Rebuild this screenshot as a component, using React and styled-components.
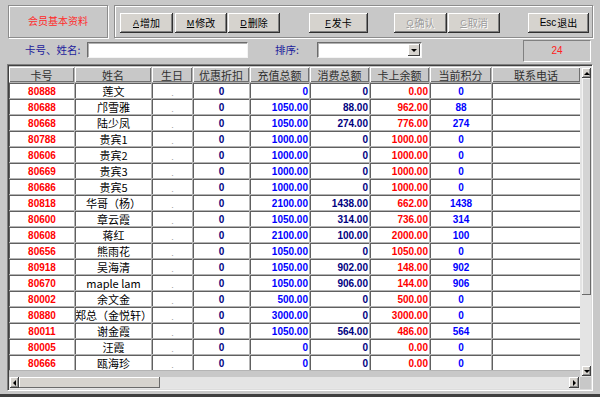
import React from 'react';
import styled, { createGlobalStyle } from 'styled-components';

const GlobalStyle = createGlobalStyle`
  html, body { margin: 0; padding: 0; background: #c8c8c8; }
  body { font-family: "Noto Sans CJK SC", "Liberation Sans", sans-serif; }
  * { box-sizing: border-box; }
`;

const CJK = `"Noto Sans CJK SC", "Liberation Sans", sans-serif`;
const NUM = `"Liberation Sans", Arial, sans-serif`;

const Window = styled.div`
  width: 600px;
  height: 397px;
  background: #c8c8c8;
  border-bottom: 3px solid #404040;
  padding-bottom: 3px;
  display: flex;
  flex-direction: column;
  overflow: hidden;
`;

const TopBar = styled.div`
  display: flex;
  gap: 6px;
  padding: 5px 7px 0 8px;
  height: 38px;
`;

const Etched = styled.div`
  border: 1px solid #8c8c8c;
  box-shadow: inset 1px 1px #ffffff, 1px 1px #ffffff;
  height: 33px;
`;

const TitlePanel = styled(Etched)`
  width: 100px;
  display: flex;
  align-items: center;
  justify-content: center;
  padding-bottom: 3px;
  color: #ff2a2a;
  font-family: ${CJK};
  font-size: 10px;
`;

const Toolbar = styled(Etched)`
  flex: 1;
  display: flex;
  align-items: flex-start;
  padding: 7px 0 0 5px;
`;

const ToolButton = styled.div`
  width: ${p => p.$w}px;
  margin-left: ${p => p.$ml || 0}px;
  height: 20px;
  background: #d6d3ce;
  box-shadow: inset -1px -1px #303030, inset 1px 1px #ffffff, inset -2px -2px #808080;
  display: flex;
  align-items: center;
  justify-content: center;
  font-family: ${CJK};
  font-size: 10px;
  color: ${p => (p.$disabled ? '#9c9c9c' : '#000')};
  text-shadow: ${p => (p.$disabled ? '1px 1px #ffffff' : 'none')};
  padding-bottom: 1px;
`;

const Key = styled.span`
  font-family: ${NUM};
  font-size: ${p => (p.$plain ? 10 : 9)}px;
  text-decoration: ${p => (p.$plain ? 'none' : 'underline')};
  margin-right: 1px;
`;

const SearchRow = styled.div`
  display: flex;
  align-items: flex-start;
  height: 23px;
  margin-top: 2px;
  padding-left: 25px;
`;

const FieldLabel = styled.div`
  width: ${p => p.$w}px;
  margin-left: ${p => p.$ml || 0}px;
  margin-top: 2px;
  height: 15px;
  line-height: 15px;
  color: #1c1c9c;
  font-family: ${CJK};
  font-size: 10.5px;
  white-space: nowrap;
`;

const TextInput = styled.div`
  width: ${p => p.$w}px;
  height: 16px;
  margin-top: 2px;
  background: #fff;
  border: 1px solid;
  border-color: #6c6c6c #f4f4f4 #f4f4f4 #6c6c6c;
  box-shadow: inset 1px 1px #b0b0b0;
`;

const SelectBox = styled(TextInput)`
  display: flex;
  justify-content: flex-end;
  padding: 1px;
`;

const DropButton = styled.div`
  width: 12px;
  height: 12px;
  background: #d6d3ce;
  box-shadow: inset -1px -1px #404040, inset 1px 1px #ffffff;
  display: flex;
  align-items: center;
  justify-content: center;
`;

const Counter = styled.div`
  width: 68px;
  height: 22px;
  margin-left: auto;
  margin-right: 9px;
  border: 1px solid;
  border-color: #808080 #ffffff #ffffff #808080;
  display: flex;
  align-items: center;
  justify-content: center;
  color: #ff2020;
  font-family: ${NUM};
  font-size: 10px;
  padding-bottom: 2px;
`;

const GridFrame = styled.div`
  flex: 1;
  margin: 1px 7px 0 7px;
  border: 1px solid;
  border-color: #808080 #ffffff #ffffff #808080;
  box-shadow: inset 1px 1px #404040, inset -1px -1px #dcdcdc;
  padding: 1px;
  display: grid;
  grid-template-columns: 571px 11px;
  grid-template-rows: 1fr 12px;
`;

const GridMain = styled.div`
  padding-top: 1px;
  overflow: hidden;
  background: #c8c8c8;
`;

const Table = styled.div`
  display: grid;
  grid-template-columns: ${p => p.$cols};
  grid-auto-rows: 15px;
  gap: 1px;
  padding-bottom: 1px;
  background: #b4b4b4;
  width: max-content;
`;

const HeadCell = styled.div`
  background: #c8c8c8;
  box-shadow: inset 1px 1px #ffffff, inset -1px -1px #707070;
  display: flex;
  align-items: center;
  justify-content: center;
  font-family: ${CJK};
  font-size: 11px;
  color: #303030;
  white-space: nowrap;
  overflow: hidden;
`;

const kindStyles = {
  id: { color: '#ff0000', font: NUM, weight: 700, size: 10 },
  name: { color: '#000000', font: CJK, weight: 400, size: 11 },
  dot: { color: '#9a9a9a', font: NUM, weight: 400, size: 9 },
  navy: { color: '#000080', font: NUM, weight: 700, size: 10 },
  blue: { color: '#0000ff', font: NUM, weight: 700, size: 10 },
  red: { color: '#ff0000', font: NUM, weight: 700, size: 10 },
};

const Cell = styled.div`
  background: #ffffff;
  border-top: 1px solid #606060;
  border-left: 1px solid #606060;
  display: flex;
  align-items: center;
  justify-content: ${p => (p.$align === 'right' ? 'flex-end' : 'center')};
  padding: ${p => (p.$align === 'right' ? '0 1px 0 0' : '0')};
  padding-top: ${p => (p.$kind === 'dot' ? '3px' : '0')};
  color: ${p => kindStyles[p.$kind].color};
  font-family: ${p => kindStyles[p.$kind].font};
  font-weight: ${p => kindStyles[p.$kind].weight};
  font-size: ${p => kindStyles[p.$kind].size}px;
  white-space: nowrap;
  overflow: hidden;
`;

const VScroll = styled.div`
  display: flex;
  flex-direction: column;
  padding: 2px 0 1px 2px;
  background: #e4e4e4;
`;

const ScrollBtn = styled.div`
  flex: none;
  width: ${p => p.$w}px;
  height: ${p => p.$h}px;
  background: #d6d3ce;
  box-shadow: inset -1px -1px #404040, inset 1px 1px #ffffff, inset -2px -2px #909090;
  display: flex;
  align-items: center;
  justify-content: center;
`;

const VThumb = styled.div`
  flex: none;
  width: 9px;
  height: 217px;
  background: #d4d4d4;
  box-shadow: inset -1px -1px #6a6a6a, inset 1px 1px #f4f4f4;
`;

const Track = styled.div`
  flex: 1;
  background: #e4e4e4;
`;

const HScroll = styled.div`
  display: flex;
  padding: 0 1px 1px 1px;
  background: #e6e6e6;
`;

const HThumb = styled.div`
  flex: none;
  width: 141px;
  background: #d6d3ce;
  box-shadow: inset -1px -1px #6a6a6a, inset 1px 1px #ffffff;
`;

const Corner = styled.div`
  background: #c8c8c8;
`;

const Tri = ({ dir }) => {
  const pts = {
    up: '0,4 6,4 3,1',
    down: '0,1 6,1 3,4',
    left: '4,0 4,6 1,3',
    right: '1,0 1,6 4,3',
  }[dir];
  const vertical = dir === 'up' || dir === 'down';
  return (
    <svg width={vertical ? 6 : 5} height={vertical ? 5 : 6} viewBox={vertical ? '0 0 6 5' : '0 0 5 6'}>
      <polygon points={pts} fill="#000" />
    </svg>
  );
};

const columns = [
  { title: '卡号', w: 65, align: 'center', kind: 'id' },
  { title: '姓名', w: 76, align: 'center', kind: 'name' },
  { title: '生日', w: 40, align: 'center', kind: 'dot' },
  { title: '优惠折扣', w: 56, align: 'center', kind: 'navy' },
  { title: '充值总额', w: 59, align: 'right', kind: 'blue' },
  { title: '消费总额', w: 59, align: 'right', kind: 'navy' },
  { title: '卡上余额', w: 59, align: 'right', kind: 'red' },
  { title: '当前积分', w: 61, align: 'center', kind: 'blue' },
  { title: '联系电话', w: 88, align: 'center', kind: 'name' },
];

const data = [
  ['80888', '莲文', '0', '0', '0.00', '0'],
  ['80688', '邝雪雅', '1050.00', '88.00', '962.00', '88'],
  ['80668', '陆少凤', '1050.00', '274.00', '776.00', '274'],
  ['80788', '贵宾1', '1000.00', '0', '1000.00', '0'],
  ['80606', '贵宾2', '1000.00', '0', '1000.00', '0'],
  ['80669', '贵宾3', '1000.00', '0', '1000.00', '0'],
  ['80686', '贵宾5', '1000.00', '0', '1000.00', '0'],
  ['80818', '华哥（杨）', '2100.00', '1438.00', '662.00', '1438'],
  ['80600', '章云霞', '1050.00', '314.00', '736.00', '314'],
  ['80608', '蒋红', '2100.00', '100.00', '2000.00', '100'],
  ['80656', '熊雨花', '1050.00', '0', '1050.00', '0'],
  ['80918', '吴海清', '1050.00', '902.00', '148.00', '902'],
  ['80670', 'maple lam', '1050.00', '906.00', '144.00', '906'],
  ['80002', '余文金', '500.00', '0', '500.00', '0'],
  ['80880', '郑总（金悦轩）', '3000.00', '0', '3000.00', '0'],
  ['80011', '谢金霞', '1050.00', '564.00', '486.00', '564'],
  ['80005', '汪霞', '0', '0', '0.00', '0'],
  ['80666', '瓯海珍', '0', '0', '0.00', '0'],
];

const buttons = [
  { k: 'A', t: '增加', w: 53, ml: 0 },
  { k: 'M', t: '修改', w: 52, ml: 2 },
  { k: 'D', t: '删除', w: 52, ml: 1 },
  { k: 'F', t: '发卡', w: 59, ml: 29 },
  { k: 'Q', t: '确认', w: 53, ml: 26, disabled: true },
  { k: 'C', t: '取消', w: 52, ml: 1, disabled: true },
  { k: 'Esc', t: '退出', w: 61, ml: 28, plain: true },
];

export default function App() {
  const cols = columns.map(c => `${c.w}px`).join(' ');
  return (
    <>
      <GlobalStyle />
      <Window>
        <TopBar>
          <TitlePanel>会员基本资料</TitlePanel>
          <Toolbar>
            {buttons.map(b => (
              <ToolButton key={b.k} $w={b.w} $ml={b.ml} $disabled={b.disabled}>
                <Key $plain={b.plain}>{b.k}</Key>
                {b.t}
              </ToolButton>
            ))}
          </Toolbar>
        </TopBar>
        <SearchRow>
          <FieldLabel $w={62}>卡号、姓名:</FieldLabel>
          <TextInput $w={161} />
          <FieldLabel $w={42} $ml={27}>排序:</FieldLabel>
          <SelectBox $w={105}>
            <DropButton>
              <Tri dir="down" />
            </DropButton>
          </SelectBox>
          <Counter>24</Counter>
        </SearchRow>
        <GridFrame>
          <GridMain>
            <Table $cols={cols}>
              {columns.map(c => (
                <HeadCell key={c.title}>{c.title}</HeadCell>
              ))}
              {data.map(r => {
                const vals = [r[0], r[1], '.', '0', r[2], r[3], r[4], r[5], ''];
                return vals.map((v, i) => (
                  <Cell key={r[0] + i} $align={columns[i].align} $kind={columns[i].kind}>
                    {v}
                  </Cell>
                ));
              })}
            </Table>
          </GridMain>
          <VScroll>
            <ScrollBtn $w={9} $h={10}>
              <Tri dir="up" />
            </ScrollBtn>
            <VThumb />
            <Track />
            <ScrollBtn $w={9} $h={10}>
              <Tri dir="down" />
            </ScrollBtn>
          </VScroll>
          <HScroll>
            <ScrollBtn $w={9} $h={11}>
              <Tri dir="left" />
            </ScrollBtn>
            <HThumb />
            <Track />
            <ScrollBtn $w={10} $h={11}>
              <Tri dir="right" />
            </ScrollBtn>
          </HScroll>
          <Corner />
        </GridFrame>
      </Window>
    </>
  );
}
